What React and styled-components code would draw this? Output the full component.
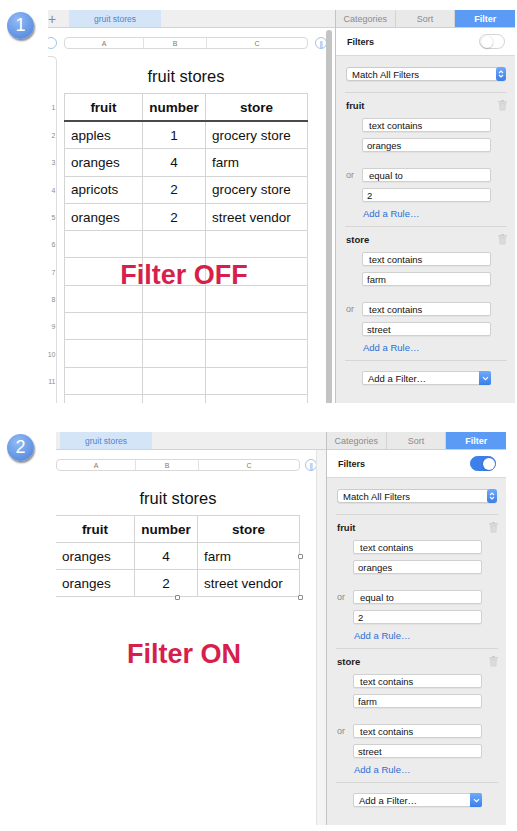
import React from "react";
import styled, { createGlobalStyle, css } from "styled-components";

const Global = createGlobalStyle`
  html, body { margin: 0; padding: 0; background: #fff; }
  body {
    font-family: "Liberation Sans", Arial, Helvetica, sans-serif;
    width: 517px; height: 831px; overflow: hidden;
  }
`;

const Page = styled.div`
  display: flex;
  flex-direction: column;
  gap: 29px;
  padding-top: 10px;
`;

const Section = styled.section`
  display: flex;
  align-items: flex-start;
  padding-left: 7px;
`;

const Badge = styled.div`
  width: 27px;
  height: 27px;
  margin-top: 2px;
  flex-shrink: 0;
  border-radius: 50%;
  background: radial-gradient(circle at 40% 30%, #92bbf5, #5d90e2 72%);
  box-shadow: 1px 2px 2px rgba(0, 0, 0, 0.45);
  color: #fff;
  font-size: 18px;
  display: flex;
  align-items: center;
  justify-content: center;
`;

const Window = styled.div`
  display: flex;
  height: 393px;
  margin-left: ${(p) => p.$offset}px;
  overflow: hidden;
`;

/* ---------- spreadsheet ---------- */

const SheetPane = styled.div`
  display: flex;
  flex-direction: column;
  width: ${(p) => p.$width}px;
  flex-shrink: 0;
`;

const TabBar = styled.div`
  height: 18px;
  box-sizing: border-box;
  border-bottom: 1px solid #d2d2d2;
  background: #efefef;
  display: flex;
  align-items: stretch;
  padding-left: ${(p) => p.$pad}px;
  flex-shrink: 0;
`;

const Plus = styled.span`
  width: 21px;
  display: flex;
  align-items: center;
  color: #8a8a8a;
  font-size: 14px;
`;

const SheetTab = styled.div`
  width: 92px;
  background: #d5e5f8;
  color: #4c82d6;
  font-size: 8.5px;
  display: flex;
  align-items: center;
  justify-content: center;
`;

const SheetBody = styled.div`
  display: flex;
  flex: 1;
  min-height: 0;
`;

const Sheet = styled.div`
  position: relative;
  flex: 1;
  background: #fff;
  overflow: hidden;
  padding-top: 9px;
  display: flex;
  flex-direction: column;
`;

const Track = styled.div`
  width: ${(p) => (p.$thumb ? 9 : 10)}px;
  flex-shrink: 0;
  box-sizing: border-box;
  display: flex;
  padding-top: 2px;
  ${(p) =>
    p.$thumb
      ? css`
          background: #fff;
        `
      : css`
          background: #f4f4f4;
          border-left: 1px solid #e3e3e3;
        `}
`;

const Thumb = styled.div`
  width: 6px;
  background: #c3c3c3;
  border-radius: 3px 3px 0 0;
`;

const Line = styled.div`
  display: flex;
  flex-shrink: 0;
  height: ${(p) => p.$h}px;
`;

const Gap = styled.div`
  width: ${(p) => p.$w}px;
  flex-shrink: 0;
`;

const GutterSlot = styled.div`
  width: 9px;
  flex-shrink: 0;
  display: flex;
  align-items: center;
`;

const RoundBtn = styled.div`
  width: 12px;
  height: 12px;
  flex-shrink: 0;
  box-sizing: border-box;
  border-radius: 50%;
  border: 1px solid #9fc3f2;
  margin-left: ${(p) => p.$ml || 0}px;
  color: #5f98ea;
  font-size: 7px;
  letter-spacing: -0.5px;
  display: flex;
  align-items: center;
  justify-content: center;
`;

const ColBar = styled.div`
  width: 244px;
  flex-shrink: 0;
  box-sizing: border-box;
  display: grid;
  grid-template-columns: 79px 63px 1fr;
  border: 1px solid #d9d9d9;
  border-radius: 4px;
`;

const ColLetter = styled.div`
  font-size: 7px;
  color: #7a7a7a;
  display: flex;
  align-items: center;
  justify-content: center;
  border-right: ${(p) => (p.$last ? "none" : "1px solid #e2e2e2")};
`;

const GutterCap = styled.div`
  width: 9px;
  flex-shrink: 0;
  margin-top: 7px;
  box-sizing: border-box;
  border-top: 1px solid #dcdcdc;
  border-right: 1px solid #dcdcdc;
  border-top-right-radius: 5px;
`;

const Title = styled.div`
  width: 244px;
  flex-shrink: 0;
  align-self: flex-end;
  padding-bottom: 8px;
  text-align: center;
  font-size: 16.5px;
  line-height: 18px;
  color: #111;
`;

const TableWrap = styled.div`
  position: relative;
  align-self: flex-start;
  display: flex;
  flex-direction: column;
`;

const NumCell = styled.div`
  width: 9px;
  flex-shrink: 0;
  box-sizing: border-box;
  border-right: 1px solid #dcdcdc;
  padding-right: 1px;
  font-size: 7px;
  letter-spacing: -0.3px;
  color: #8d8d8d;
  white-space: nowrap;
  display: flex;
  align-items: center;
  justify-content: flex-end;
`;

const Grid = styled.div`
  width: 244px;
  flex-shrink: 0;
  box-sizing: border-box;
  display: grid;
  grid-template-columns: 79px 63px 1fr;
  border-bottom: ${(p) => (p.$thick ? "2px solid #4a4a4a" : "1px solid #d4d4d4")};
  border-top: ${(p) => (p.$top ? "1px solid #d4d4d4" : "none")};
`;

const Cell = styled.div`
  box-sizing: border-box;
  border-right: 1px solid #d4d4d4;
  border-left: ${(p) => (p.$edge ? "1px solid #d4d4d4" : "none")};
  display: flex;
  align-items: center;
  justify-content: ${(p) => (p.$center ? "center" : "flex-start")};
  padding: 0 6px;
  font-size: 13.5px;
  font-weight: ${(p) => (p.$bold ? 700 : 400)};
  color: #111;
  white-space: nowrap;
`;

const Handle = styled.div`
  position: absolute;
  width: 5px;
  height: 5px;
  box-sizing: border-box;
  background: #fff;
  border: 1px solid #8a8a8a;
  border-radius: 1px;
  ${(p) => p.$pos}
`;

const BigLabel = styled.div`
  position: absolute;
  left: ${(p) => p.$x}px;
  top: ${(p) => p.$y}px;
  transform: translate(-50%, -50%);
  font-size: 27px;
  font-weight: 700;
  color: #d61f4d;
  white-space: nowrap;
`;

function Spreadsheet({ cfg }) {
  const { gutter, rows, emptyRows, thick, rowH, width, thumb, label, lx, ly, handles } = cfg;
  const all = [...rows, ...Array.from({ length: emptyRows }, () => ["", "", ""])];
  return (
    <SheetPane $width={width + (thumb ? 9 : 10)}>
      <TabBar $pad={gutter ? 0 : 4}>
        {gutter && <Plus>+</Plus>}
        <SheetTab>gruit stores</SheetTab>
      </TabBar>
      <SheetBody>
        <Sheet>
          <Line $h={12}>
            {gutter && (
              <>
                <GutterSlot>
                  <RoundBtn $ml={-3} />
                </GutterSlot>
                <Gap $w={7} />
              </>
            )}
            <ColBar>
              <ColLetter>A</ColLetter>
              <ColLetter>B</ColLetter>
              <ColLetter $last>C</ColLetter>
            </ColBar>
            <Gap $w={gutter ? 7 : 5} />
            <RoundBtn>||</RoundBtn>
          </Line>
          <Line $h={44}>
            {gutter && (
              <>
                <GutterCap />
                <Gap $w={7} />
              </>
            )}
            <Title>fruit stores</Title>
          </Line>
          <TableWrap>
            <Line $h={thick ? 29 : 28}>
              {gutter && (
                <>
                  <NumCell>1</NumCell>
                  <Gap $w={7} />
                </>
              )}
              <Grid $top $thick={thick}>
                <Cell $edge={gutter} $center $bold>fruit</Cell>
                <Cell $center $bold>number</Cell>
                <Cell $center $bold>store</Cell>
              </Grid>
            </Line>
            {all.map((r, i) => (
              <Line key={i} $h={rowH}>
                {gutter && (
                  <>
                    <NumCell>{i + 2 <= 11 ? i + 2 : ""}</NumCell>
                    <Gap $w={7} />
                  </>
                )}
                <Grid>
                  <Cell $edge={gutter}>{r[0]}</Cell>
                  <Cell $center>{r[1]}</Cell>
                  <Cell>{r[2]}</Cell>
                </Grid>
              </Line>
            ))}
            {handles && (
              <>
                <Handle $pos="right: -3px; top: 50%; margin-top: -2px;" />
                <Handle $pos="left: 50%; bottom: -3px; margin-left: -3px;" />
                <Handle $pos="right: -3px; bottom: -3px;" />
              </>
            )}
          </TableWrap>
          <BigLabel $x={lx} $y={ly}>{label}</BigLabel>
        </Sheet>
        <Track $thumb={thumb}>{thumb && <Thumb />}</Track>
      </SheetBody>
    </SheetPane>
  );
}

/* ---------- sidebar ---------- */

const Sidebar = styled.aside`
  width: 180px;
  flex-shrink: 0;
  box-sizing: border-box;
  border-left: 1px solid #c4c4c4;
  background: #ececec;
  display: flex;
  flex-direction: column;
`;

const Tabs = styled.div`
  height: 18px;
  box-sizing: border-box;
  display: grid;
  grid-template-columns: repeat(3, 1fr);
  background: #e9e9e9;
  border-bottom: 1px solid #cfcfcf;
  flex-shrink: 0;
`;

const Tab = styled.div`
  display: flex;
  align-items: center;
  justify-content: center;
  font-size: 9px;
  color: #8b8b8b;
  border-right: 1px solid #d3d3d3;
  ${(p) =>
    p.$active &&
    css`
      background: #5b9bf6;
      color: #fff;
      font-weight: 700;
      border-right: none;
    `}
`;

const FiltersHead = styled.div`
  height: 28px;
  box-sizing: border-box;
  background: #fff;
  border-bottom: 1px solid #d9d9d9;
  padding: 0 10px 0 11px;
  display: flex;
  align-items: center;
  justify-content: space-between;
  flex-shrink: 0;
`;

const HeadLabel = styled.span`
  font-size: 9px;
  font-weight: 700;
  color: #1a1a1a;
`;

const Toggle = styled.div`
  width: 26px;
  height: 15px;
  box-sizing: border-box;
  border-radius: 8px;
  border: 1px solid ${(p) => (p.$on ? "#3a7ee6" : "#d3d3d3")};
  background: ${(p) => (p.$on ? "#3d80ea" : "#fff")};
  display: flex;
  align-items: center;
  justify-content: ${(p) => (p.$on ? "flex-end" : "flex-start")};
  padding: 0 0.5px;
`;

const Knob = styled.div`
  width: 12px;
  height: 12px;
  border-radius: 50%;
  background: #fff;
  box-shadow: 0 0.5px 1.5px rgba(0, 0, 0, 0.35);
`;

const Body = styled.div`
  padding: 11px 8px 0 9px;
  display: flex;
  flex-direction: column;
`;

const SelectBox = styled.div`
  height: 14px;
  box-sizing: border-box;
  margin: 0 1px;
  background: #fff;
  border: 1px solid #cbcbcb;
  border-radius: 3px;
  display: flex;
  align-items: center;
  justify-content: space-between;
  padding-left: 5px;
  font-size: 9.5px;
  color: #111;
  box-shadow: 0 1px 0 rgba(0, 0, 0, 0.06);
`;

const Stepper = styled.div`
  width: 10px;
  height: 14px;
  margin-right: -1px;
  border-radius: 3px;
  background: linear-gradient(#6fabfb, #3a7ee8);
  display: flex;
  align-items: center;
  justify-content: center;
`;

const Sep = styled.div`
  border-top: 1px solid #d6d6d6;
  margin-top: ${(p) => p.$mt}px;
`;

const GroupHead = styled.div`
  height: 25px;
  display: flex;
  align-items: center;
  justify-content: space-between;
  padding-left: 1px;
  font-size: 9.5px;
  font-weight: 700;
  color: #1a1a1a;
`;

const Rule = styled.div`
  display: flex;
  margin-top: ${(p) => (p.$first ? 0 : 16)}px;
`;

const OrLabel = styled.div`
  width: 17px;
  flex-shrink: 0;
  height: 14px;
  line-height: 14px;
  padding-left: 1px;
  box-sizing: border-box;
  font-size: 9px;
  color: #8a8a8a;
`;

const Fields = styled.div`
  display: flex;
  flex-direction: column;
  gap: 6px;
`;

const Field = styled.div`
  width: 129px;
  height: 14px;
  box-sizing: border-box;
  background: #fff;
  border: 1px solid #d0d0d0;
  border-radius: 2px;
  display: flex;
  align-items: center;
  padding-left: ${(p) => (p.$popup ? 6 : 4)}px;
  font-size: 9.5px;
  color: #111;
  box-shadow: 0 1px 0 rgba(0, 0, 0, 0.04);
`;

const AddRule = styled.div`
  margin-top: 6px;
  line-height: 12px;
  padding-left: 18px;
  font-size: 9.5px;
  color: #2b6fd6;
`;

const AddFilter = styled(Field)`
  margin: 10px 0 0 17px;
  padding-left: 5px;
  justify-content: space-between;
`;

const ChevronBox = styled.div`
  width: 12px;
  height: 14px;
  margin-right: -1px;
  border-radius: 0 2px 2px 0;
  background: linear-gradient(#6fabfb, #3a7ee8);
  display: flex;
  align-items: center;
  justify-content: center;
`;

const Trash = () => (
  <svg width="9" height="11" viewBox="0 0 9 11">
    <rect x="3" y="0" width="3" height="1.6" rx="0.5" fill="#cacaca" />
    <rect x="0" y="1.3" width="9" height="1.3" rx="0.5" fill="#cacaca" />
    <path d="M1 3.1h7l-0.6 7.4H1.6z" fill="#d4d4d4" />
    <path d="M3 4.2v5.2M4.5 4.2v5.2M6 4.2v5.2" stroke="#e4e4e4" strokeWidth="0.6" />
  </svg>
);

const StepIcon = () => (
  <svg width="6" height="10" viewBox="0 0 6 10">
    <path d="M1 4 L3 2 L5 4 M1 6 L3 8 L5 6" stroke="#fff" fill="none" strokeWidth="1.1" />
  </svg>
);

const DownIcon = () => (
  <svg width="7" height="5" viewBox="0 0 7 5">
    <path d="M1 1.2 L3.5 3.7 L6 1.2" stroke="#fff" fill="none" strokeWidth="1.2" />
  </svg>
);

const groups = [
  {
    name: "fruit",
    rules: [
      ["text contains", "oranges"],
      ["equal to", "2"],
    ],
  },
  {
    name: "store",
    rules: [
      ["text contains", "farm"],
      ["text contains", "street"],
    ],
  },
];

function FilterSidebar({ on }) {
  return (
    <Sidebar>
      <Tabs>
        <Tab>Categories</Tab>
        <Tab>Sort</Tab>
        <Tab $active>Filter</Tab>
      </Tabs>
      <FiltersHead>
        <HeadLabel>Filters</HeadLabel>
        <Toggle $on={on}>
          <Knob />
        </Toggle>
      </FiltersHead>
      <Body>
        <SelectBox>
          Match All Filters
          <Stepper>
            <StepIcon />
          </Stepper>
        </SelectBox>
        {groups.map((g, gi) => (
          <React.Fragment key={g.name}>
            <Sep $mt={gi === 0 ? 11 : 6} />
            <GroupHead>
              {g.name}
              <Trash />
            </GroupHead>
            {g.rules.map((r, ri) => (
              <Rule key={ri} $first={ri === 0}>
                <OrLabel>{ri > 0 ? "or" : ""}</OrLabel>
                <Fields>
                  <Field $popup>{r[0]}</Field>
                  <Field>{r[1]}</Field>
                </Fields>
              </Rule>
            ))}
            <AddRule>Add a Rule…</AddRule>
          </React.Fragment>
        ))}
        <Sep $mt={6} />
        <AddFilter>
          Add a Filter…
          <ChevronBox>
            <DownIcon />
          </ChevronBox>
        </AddFilter>
      </Body>
    </Sidebar>
  );
}

const off = {
  gutter: true,
  rows: [
    ["apples", "1", "grocery store"],
    ["oranges", "4", "farm"],
    ["apricots", "2", "grocery store"],
    ["oranges", "2", "street vendor"],
  ],
  emptyRows: 7,
  thick: true,
  rowH: 27.3,
  width: 278,
  thumb: true,
  label: "Filter OFF",
  lx: 136,
  ly: 247,
  handles: false,
};

const onCfg = {
  gutter: false,
  rows: [
    ["oranges", "4", "farm"],
    ["oranges", "2", "street vendor"],
  ],
  emptyRows: 0,
  thick: false,
  rowH: 27,
  width: 260,
  thumb: false,
  label: "Filter ON",
  lx: 128,
  ly: 204,
  handles: true,
};

export default function App() {
  return (
    <>
      <Global />
      <Page>
        <Section>
          <Badge>1</Badge>
          <Window $offset={14}>
            <Spreadsheet cfg={off} />
            <FilterSidebar on={false} />
          </Window>
        </Section>
        <Section>
          <Badge>2</Badge>
          <Window $offset={22}>
            <Spreadsheet cfg={onCfg} />
            <FilterSidebar on />
          </Window>
        </Section>
      </Page>
    </>
  );
}
